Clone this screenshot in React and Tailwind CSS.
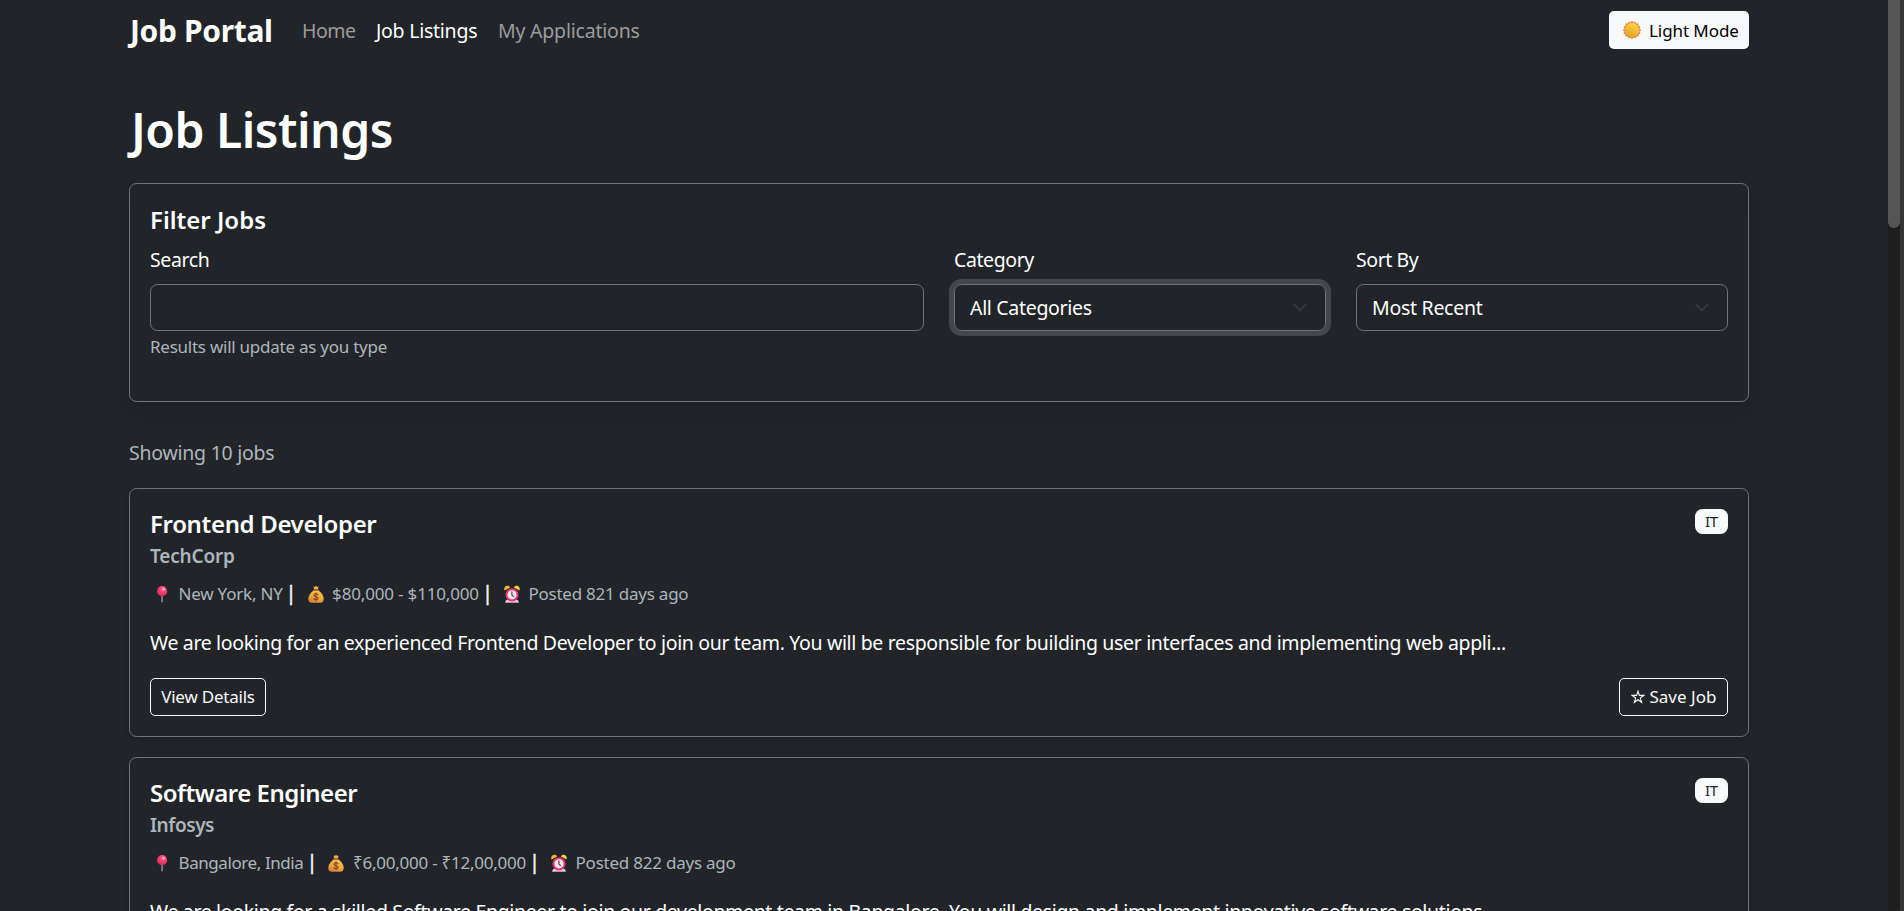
import React from "react";

function SunIcon() {
  const points = Array.from({ length: 16 }, (_, i) => {
    const a = (i * Math.PI) / 8;
    return { x: 10 + 7.6 * Math.cos(a), y: 10 + 7.6 * Math.sin(a) };
  });
  return (
    <svg viewBox="0 0 20 20" className="size-5 shrink-0">
      <defs>
        <linearGradient id="sun" x1="0.7" y1="0.1" x2="0.3" y2="1">
          <stop offset="0" stopColor="#ffd23c" />
          <stop offset="1" stopColor="#e2a02c" />
        </linearGradient>
      </defs>
      {points.map((p, i) => (
        <circle key={i} cx={p.x} cy={p.y} r="1.35" fill="#ea9448" />
      ))}
      <circle cx="10" cy="10" r="7.7" fill="#e8953c" />
      <circle cx="10" cy="10" r="6.9" fill="url(#sun)" />
    </svg>
  );
}

function PinIcon() {
  return (
    <svg viewBox="0 0 20 20" className="size-5 shrink-0">
      <defs>
        <radialGradient id="pin" cx="0.6" cy="0.3" r="0.75">
          <stop offset="0" stopColor="#ff6f9a" />
          <stop offset="0.5" stopColor="#f23a6c" />
          <stop offset="1" stopColor="#d3295c" />
        </radialGradient>
      </defs>
      <rect x="9.3" y="11" width="1.6" height="8.6" rx="0.8" fill="#8b8794" />
      <circle cx="10.1" cy="8.2" r="5.1" fill="url(#pin)" />
      <circle cx="11.7" cy="6.3" r="1.3" fill="#ffb0cb" />
    </svg>
  );
}

function BagIcon() {
  return (
    <svg viewBox="0 0 20 20" className="size-5 shrink-0">
      <defs>
        <linearGradient id="bag" x1="0.8" y1="0" x2="0.3" y2="1">
          <stop offset="0" stopColor="#ffc94a" />
          <stop offset="0.6" stopColor="#f0a33c" />
          <stop offset="1" stopColor="#d87f3a" />
        </linearGradient>
      </defs>
      <path d="M7.4 3.6 8.8 4 10 2.8l1.3 1.2 1.4-.4-.9 3H8.3z" fill="#f3b04a" />
      <path
        d="M8 7.3h4.1c3.2 2 5.6 5.4 5.6 8.8 0 2.4-1.3 3.6-3.4 3.6H5.7c-2.1 0-3.4-1.2-3.4-3.6 0-3.4 2.5-6.8 5.7-8.8z"
        fill="url(#bag)"
      />
      <rect x="7.2" y="6.2" width="5.7" height="1.5" rx="0.7" fill="#a5603a" />
      <path
        d="M12 11.7c-.3-.7-1.1-1-2-1-1.2 0-2 .6-2 1.5 0 2 4.1 1 4.1 3 0 .9-.9 1.5-2.1 1.5-1 0-1.9-.4-2.2-1.2M10 9.7v8"
        fill="none"
        stroke="#7d4528"
        strokeWidth="1.1"
        strokeLinecap="round"
      />
    </svg>
  );
}

function ClockIcon() {
  return (
    <svg viewBox="0 0 20 20" className="size-5 shrink-0">
      <path d="M3.2 19.7c0-1.8 1-2.9 2.3-2.9h9c1.3 0 2.3 1.1 2.3 2.9z" fill="#e3c5e6" />
      <circle cx="10" cy="11.8" r="6.6" fill="#e8386a" />
      <circle cx="10" cy="11.8" r="4.6" fill="#fbe4f1" />
      <path d="M9.9 8.8v3.2l1.5 1.4" fill="none" stroke="#4b3350" strokeWidth="1.1" strokeLinecap="round" />
      <path d="M2.5 7.6C1.6 5.2 3 2.8 5.3 2.8c1.4 0 2.4.7 2.8 1.6z" fill="#f5b63c" />
      <path d="M17.5 7.6c.9-2.4-.5-4.8-2.8-4.8-1.4 0-2.4.7-2.8 1.6z" fill="#f9cc45" />
    </svg>
  );
}

function StarIcon() {
  return (
    <svg viewBox="0 0 14 14" className="size-3.5 shrink-0">
      <path
        d="M7 1.2 8.4 5.4h4.4L9.3 8l1.3 4.3L7 9.7l-3.6 2.6L4.7 8 1.2 5.4h4.4z"
        fill="none"
        stroke="#f8f9fa"
        strokeWidth="1.1"
      />
    </svg>
  );
}

function Chevron() {
  return (
    <svg viewBox="0 0 16 16" className="h-[15px] w-5 shrink-0">
      <path
        d="m2 5 6 6 6-6"
        fill="none"
        stroke="#343a40"
        strokeWidth="2"
        strokeLinecap="round"
        strokeLinejoin="round"
      />
    </svg>
  );
}

function SelectBox({ children, focused }) {
  return (
    <div
      className={
        "flex h-[47px] items-center justify-between rounded-[7.5px] border border-[#6c757d] pr-[15px] pl-[15px] " +
        (focused ? "shadow-[0_0_0_5px_#43474b]" : "")
      }
    >
      {children}
      <Chevron />
    </div>
  );
}

function Divider() {
  return (
    <span className="mr-[9px] ml-[3px] w-[11px] text-center text-[20px] leading-[30px] text-[#f8f9fa] [-webkit-text-stroke:0.4px]">
      |
    </span>
  );
}

const jobs = [
  {
    title: "Frontend Developer",
    titleClass: "tracking-[-0.35px]",
    company: "TechCorp",
    companyClass: "tracking-[-0.2px]",
    location: "New York, NY",
    locationClass: "tracking-[-0.21px]",
    salary: "$80,000 - $110,000",
    salaryClass: "tracking-[-0.17px]",
    posted: "Posted 821 days ago",
    text: "We are looking for an experienced Frontend Developer to join our team. You will be responsible for building user interfaces and implementing web appli...",
  },
  {
    title: "Software Engineer",
    titleClass: "tracking-[-0.47px]",
    company: "Infosys",
    companyClass: "tracking-[-0.43px]",
    location: "Bangalore, India",
    locationClass: "tracking-[-0.42px]",
    salary: "₹6,00,000 - ₹12,00,000",
    salaryClass: "tracking-[-0.24px]",
    posted: "Posted 822 days ago",
    text: "We are looking for a skilled Software Engineer to join our development team in Bangalore. You will design and implement innovative software solutions...",
  },
];

function JobCard({ job }) {
  return (
    <article className="mb-5 rounded-[7.5px] border border-[#6c757d] bg-[#212529] p-5 shadow-[0_2.5px_5px_rgba(0,0,0,0.15)]">
      <div className="flex items-start justify-between">
        <div>
          <h5 className={"mb-[5px] text-[24px] leading-[30px] font-semibold text-white " + job.titleClass}>{job.title}</h5>
          <h6 className={"mb-[10px] text-[19px] leading-6 font-semibold text-[#adb5bd] " + job.companyClass}>{job.company}</h6>
        </div>
        <span className="flex h-[25px] w-[33px] items-center justify-center rounded-[7.5px] bg-[#f8f9fa] text-[15px] leading-none tracking-[-0.3px] text-[#212529]">
          IT
        </span>
      </div>
      <div className="mb-5 flex h-[30px] items-center pl-[2px] text-[17px] whitespace-nowrap text-[#adb5bd]">
        <PinIcon />
        <span className={"ml-[6.5px] pt-[2px] " + job.locationClass}>{job.location}</span>
        <Divider />
        <BagIcon />
        <span className={"ml-[6.5px] pt-[2px] " + job.salaryClass}>{job.salary}</span>
        <Divider />
        <ClockIcon />
        <span className="ml-[6.5px] pt-[2px] tracking-[-0.23px]">{job.posted}</span>
      </div>
      <p className="mb-5 text-[19.5px] leading-[30px] tracking-[-0.343px] whitespace-nowrap text-white">{job.text}</p>
      <div className="flex justify-between text-[17px] text-[#f8f9fa]">
        <button className="flex h-[38px] w-[116px] items-center justify-center rounded-[5px] border border-[#f8f9fa] tracking-[-0.22px] whitespace-nowrap">
          View Details
        </button>
        <button className="flex h-[38px] w-[109px] items-center rounded-[5px] border border-[#f8f9fa] pl-[10.5px] whitespace-nowrap">
          <StarIcon />
          <span className="ml-[5px]">Save Job</span>
        </button>
      </div>
    </article>
  );
}

export default function App() {
  return (
    <div className="flex h-[911px] w-full overflow-hidden bg-[#212529] font-['Noto_Sans',sans-serif] text-white">
      <div className="h-full min-w-0 flex-1 overflow-hidden pl-[129px]">
        <div className="w-[1620px]">
          <nav className="flex h-[60px] items-center">
            <span className="w-[173px] pl-px text-[30px] leading-[45px] font-bold tracking-[-0.35px]">Job Portal</span>
            <div className="flex flex-1 items-center pt-[2px] text-[19.5px] leading-[30px] text-[#9a9c9e]">
              <span className="w-[74px] tracking-[-0.5px]">Home</span>
              <span className="w-[122px] tracking-[-0.25px] text-white">Job Listings</span>
              <span className="tracking-[-0.21px]">My Applications</span>
            </div>
            <button className="flex h-[38px] w-[140px] items-center rounded-[5px] bg-[#f8f9fa] pl-[13px] text-[17px] tracking-[-0.08px] whitespace-nowrap text-black">
              <SunIcon />
              <span className="ml-[7px] pt-[2px]">Light Mode</span>
            </button>
          </nav>

          <h1 className="mt-10 mb-[23px] pl-[2px] text-[48px] leading-[60px] font-semibold tracking-[-0.5px]">Job Listings</h1>

          <section className="h-[219px] rounded-[7.5px] border border-[#6c757d] p-5 shadow-[0_10px_20px_rgba(0,0,0,0.15)]">
            <h5 className="mb-[9px] pt-px text-[24px] leading-[30px] font-semibold">Filter Jobs</h5>
            <div className="grid grid-cols-[774px_372px_372px] gap-[30px] text-[19.5px] leading-[30px]">
              <div>
                <label className="mb-[9px] block pt-px tracking-[-0.38px]">Search</label>
                <div className="h-[47px] rounded-[7.5px] border border-[#6c757d]" />
                <p className="mt-[3px] text-[17px] leading-[26px] tracking-[-0.25px] text-[#adb5bd]">Results will update as you type</p>
              </div>
              <div>
                <label className="mb-[9px] block pt-px tracking-[-0.41px]">Category</label>
                <SelectBox focused>
                  <span className="tracking-[-0.31px]">All Categories</span>
                </SelectBox>
              </div>
              <div>
                <label className="mb-[9px] block pt-px tracking-[-0.43px]">Sort By</label>
                <SelectBox>
                  <span className="tracking-[-0.28px]">Most Recent</span>
                </SelectBox>
              </div>
            </div>
          </section>

          <p className="mt-9 mb-5 text-[19.5px] leading-[30px] tracking-[-0.25px] text-[#adb5bd]">Showing 10 jobs</p>

          {jobs.map((job) => (
            <JobCard key={job.title} job={job} />
          ))}
        </div>
      </div>
      <div className="h-full w-3 shrink-0 rounded-br-md bg-[#1e1e1e]">
        <div className="h-[228px] rounded-b-full bg-[#555555]" />
      </div>
      <div className="h-full w-1 shrink-0 bg-[#353535]" />
    </div>
  );
}
